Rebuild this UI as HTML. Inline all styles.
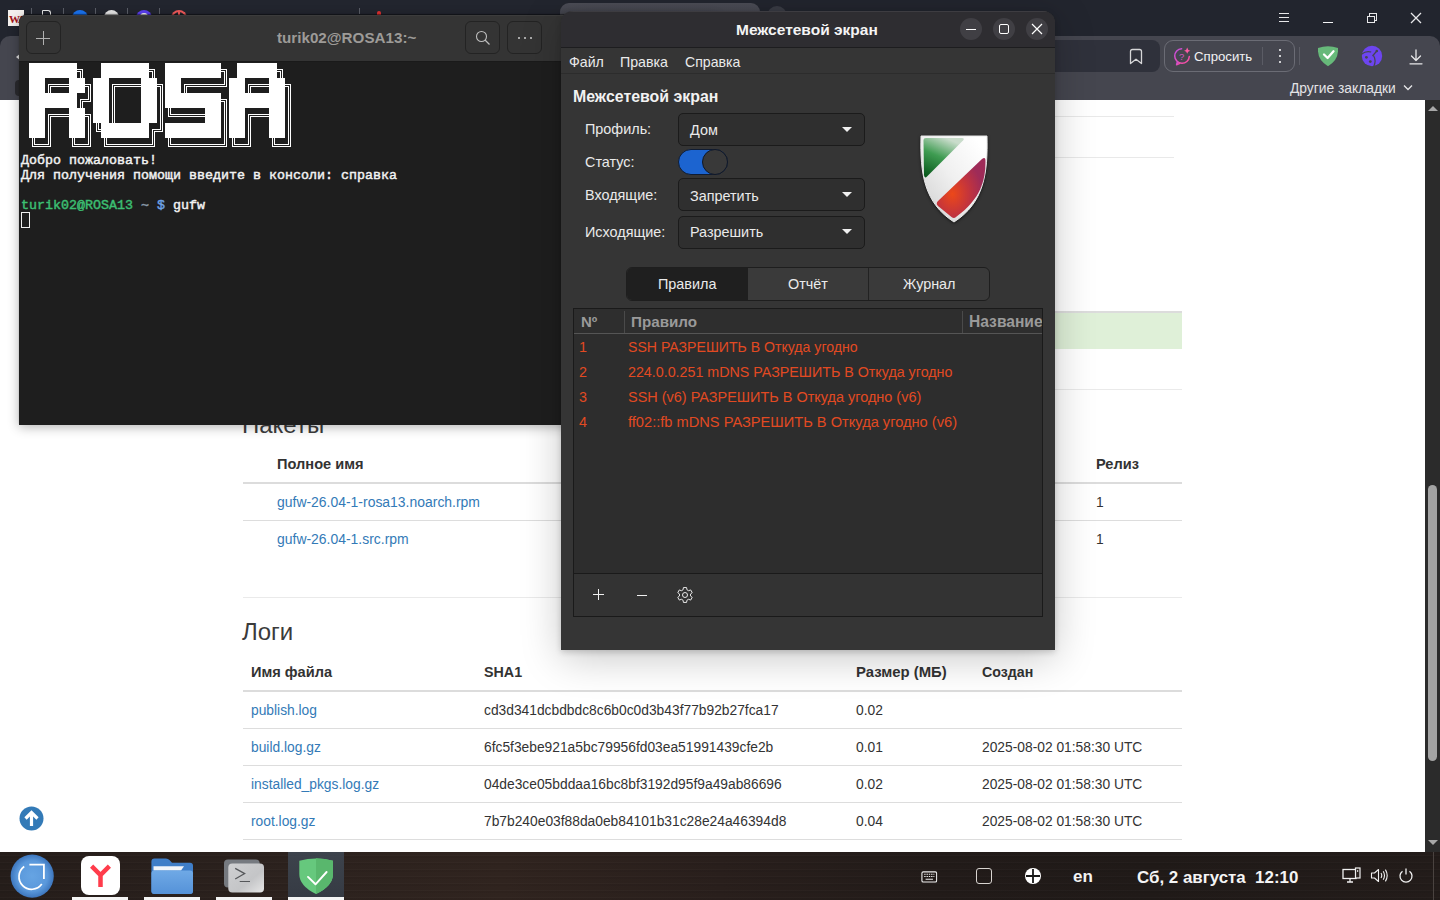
<!DOCTYPE html>
<html><head><meta charset="utf-8">
<style>
*{box-sizing:border-box;margin:0;padding:0}
html,body{width:1440px;height:900px;overflow:hidden;background:#fff;font-family:"Liberation Sans",sans-serif}
.a{position:absolute}
.t{position:absolute;white-space:pre;line-height:1}
</style></head><body>
<div class="a" style="left:0;top:0;width:1440px;height:900px">

<!-- ===== BROWSER ===== -->
<div class="a" id="tabbar" style="left:0;top:0;width:1440px;height:60px;background:#22252e">
  <!-- pinned tab favicons -->
  <div class="a" style="left:8px;top:10px;width:16px;height:16px;background:#f4f0ee;overflow:hidden"><div class="t" style="left:1px;top:3px;font:bold 11px 'Liberation Serif',serif;color:#a3141a;letter-spacing:-1px">WA</div></div>
  <div class="a" style="left:31px;top:8px;width:1px;height:6px;background:#5a5d66"></div>
  <div class="a" style="left:42px;top:10px;width:9px;height:8px;border:1.5px solid #e8e8e8;border-bottom:none;border-radius:1px 3px 0 0"></div>
  <div class="a" style="left:63px;top:8px;width:1px;height:6px;background:#5a5d66"></div>
  <div class="a" style="left:72px;top:10px;width:16px;height:8px;background:#1a73f0;border-radius:8px 8px 0 0"></div>
  <div class="a" style="left:95px;top:8px;width:1px;height:6px;background:#5a5d66"></div>
  <div class="a" style="left:104px;top:10px;width:15px;height:8px;background:#e6e6e6;border-radius:8px 8px 0 0"></div>
  <div class="a" style="left:127px;top:8px;width:1px;height:6px;background:#5a5d66"></div>
  <div class="a" style="left:136px;top:10px;width:16px;height:8px;background:#5b3ff0;border-radius:8px 8px 0 0"><div class="a" style="left:4px;top:3px;width:8px;height:6px;background:#fff;border-radius:4px 4px 0 0"></div></div>
  <div class="a" style="left:159px;top:8px;width:1px;height:6px;background:#5a5d66"></div>
  <div class="a" style="left:171px;top:10px;width:16px;height:8px;border:2px solid #f05a5a;border-bottom:none;border-radius:8px 8px 0 0"><div class="a" style="left:5px;top:0;width:2px;height:6px;background:#f05a5a"></div></div>
  <div class="a" style="left:359px;top:8px;width:1px;height:6px;background:#5a5d66"></div>
  <div class="a" style="left:377px;top:11px;width:4px;height:5px;background:#e03030;border-radius:2px 2px 0 0"></div>
  <!-- active tab -->
  <div class="a" style="left:560px;top:3px;width:200px;height:40px;background:linear-gradient(#4b4c55,#45464f 12px);border-radius:9px 9px 0 0"></div>
  <div class="a" style="left:767px;top:6px;width:20px;height:20px;background:#3a3c45;border-radius:50%"></div>
  <!-- window controls -->
  <div class="a" style="left:1279px;top:13px;width:10px;height:1.4px;background:#e8e8ea"></div>
  <div class="a" style="left:1279px;top:17px;width:10px;height:1.4px;background:#e8e8ea"></div>
  <div class="a" style="left:1279px;top:21px;width:10px;height:1.4px;background:#e8e8ea"></div>
  <div class="a" style="left:1323px;top:22px;width:10px;height:1px;background:#f4f4f6"></div>
  <div class="a" style="left:1369px;top:13px;width:8px;height:7.5px;border:1.4px solid #e8e8ea"></div>
  <div class="a" style="left:1367px;top:16px;width:7.5px;height:7px;border:1.4px solid #e8e8ea;background:#22252e"></div>
  <svg class="a" style="left:1410px;top:12px" width="12" height="12" viewBox="0 0 12 12"><path d="M1 1L11 11M11 1L1 11" stroke="#e8e8ea" stroke-width="1.3"/></svg>
</div>
<div class="a" id="toolbar" style="left:0;top:36px;width:1440px;height:64px;background:#45464f;border-radius:10px 10px 0 0">
  <div class="a" style="left:15px;top:44px;width:8px;height:16px;background:#2a2a2e;border-radius:4px"></div>
  <div class="a" style="left:16px;top:17px;width:0;height:0;border-top:4px solid transparent;border-bottom:4px solid transparent;border-right:5px solid #e0e0e0"></div>
  <!-- url field -->
  <div class="a" style="left:900px;top:4px;width:260px;height:32px;background:#2f313b;border-radius:8px"></div>
  <svg class="a" style="left:1129px;top:12px" width="14" height="17" viewBox="0 0 14 17"><path d="M1.5 15.5V3.5Q1.5 1.5 3.5 1.5H10.5Q12.5 1.5 12.5 3.5V15.5L7 11.2 1.5 15.5Z" fill="none" stroke="#d6d6d8" stroke-width="1.3" stroke-linejoin="round"/></svg>
  <!-- Ask button -->
  <div class="a" style="left:1164px;top:4px;width:131px;height:32px;border:1px solid #6b6c75;border-radius:9px"></div>
  <svg class="a" style="left:1173px;top:10px" width="20" height="20" viewBox="0 0 20 20"><defs><linearGradient id="pk" x1="0" y1="0" x2="1" y2="1"><stop offset="0" stop-color="#c04ee0"/><stop offset="1" stop-color="#ff4f9a"/></linearGradient></defs><path d="M8.6 2.7A7.3 7.3 0 1 0 16.3 10.6" fill="none" stroke="url(#pk)" stroke-width="1.5" stroke-linecap="round"/><path d="M4.4 15.6L3.6 18.8L7.3 17.1" fill="none" stroke="url(#pk)" stroke-width="1.5" stroke-linejoin="round"/><text x="6.1" y="13.6" font-family="Liberation Sans" font-size="9.5" fill="#d456c4">?</text><path d="M14.2 1.6Q14.6 4.3 17.3 4.7Q14.6 5.1 14.2 7.8Q13.8 5.1 11.1 4.7Q13.8 4.3 14.2 1.6Z" fill="#ff5aa6"/></svg>
  <div class="t" style="left:1194px;top:14px;font-size:13.2px;color:#f2f2f4">Спросить</div>
  <div class="a" style="left:1262px;top:11px;width:1px;height:18px;background:#5b5c65"></div>
  <div class="a" style="left:1278.5px;top:12.5px;width:2px;height:2px;background:#cfcfd2"></div>
  <div class="a" style="left:1278.5px;top:18.5px;width:2px;height:2px;background:#cfcfd2"></div>
  <div class="a" style="left:1278.5px;top:24.5px;width:2px;height:2px;background:#cfcfd2"></div>
  <div class="a" style="left:1299px;top:11px;width:1px;height:18px;background:#5b5c65"></div>
  <!-- shield -->
  <svg class="a" style="left:1317px;top:9px" width="22" height="22" viewBox="0 0 22 22"><path d="M1 3Q11 -0.5 21 3V6.5Q20.5 15.5 11 21.2Q1.5 15.5 1 6.5Z" fill="#67b97a"/><path d="M7 9.5L10.6 13L16.5 6.3" fill="none" stroke="#fff" stroke-width="2.3" stroke-linecap="round" stroke-linejoin="round"/></svg>
  <!-- purple -->
  <svg class="a" style="left:1361px;top:9px" width="22" height="22" viewBox="0 0 22 22"><circle cx="11" cy="11" r="10.2" fill="#6d45ef"/><g fill="none" stroke="#45464f" stroke-width="1.2"><path d="M0.8 9Q5 5.5 10.2 7"/><path d="M12.5 10.5Q15.5 15.5 12.8 21.5"/><path d="M11.5 11L15.8 6"/></g><circle cx="15.8" cy="6" r="1.3" fill="#45464f"/><circle cx="5.4" cy="12.3" r="1.4" fill="#45464f"/><circle cx="9.3" cy="16.6" r="1.4" fill="#45464f"/></svg>
  <!-- download -->
  <svg class="a" style="left:1409px;top:13px" width="14" height="16" viewBox="0 0 14 16"><path d="M7 1v10.5M2.5 7L7 11.5 11.5 7M1 14.8h12" fill="none" stroke="#e8e8ea" stroke-width="1.3" stroke-linecap="round" stroke-linejoin="round"/></svg>
  <!-- bookmarks -->
  <div class="t" style="left:1290px;top:45.5px;font-size:13.8px;color:#e4e4e6">Другие закладки</div>
  <svg class="a" style="left:1403px;top:48px" width="10" height="7" viewBox="0 0 10 7"><path d="M1 1.5l4 4 4-4" fill="none" stroke="#e6e6e8" stroke-width="1.3"/></svg>
</div>
<div class="a" id="page" style="left:0;top:100px;width:1425px;height:752px;background:#fff;overflow:hidden;color:#333">
  <div class="a" style="left:243px;top:16px;width:931px;height:1px;background:#e9e9e9"></div>
  <div class="a" style="left:243px;top:57px;width:931px;height:1px;background:#e9e9e9"></div>
  <div class="a" style="left:243px;top:211px;width:939px;height:2px;background:#dcdcdc"></div>
  <div class="a" style="left:243px;top:213px;width:939px;height:36px;background:#dff0d8"></div>
  <div class="a" style="left:243px;top:289px;width:939px;height:1px;background:#eaeaea"></div>
  <!-- Packages -->
  <div class="t" style="left:242px;top:313px;font-size:24px;color:#3b3b3b">Пакеты</div>
  <div class="t" style="left:277px;top:357px;font-size:14.6px;font-weight:bold">Полное имя</div>
  <div class="t" style="left:1096px;top:357px;font-size:14.6px;font-weight:bold">Релиз</div>
  <div class="a" style="left:243px;top:382px;width:939px;height:2px;background:#dcdcdc"></div>
  <div class="t" style="left:277px;top:396px;font-size:13.95px;color:#337ab7">gufw-26.04-1-rosa13.noarch.rpm</div>
  <div class="t" style="left:1096px;top:396px;font-size:13.85px">1</div>
  <div class="a" style="left:243px;top:420px;width:939px;height:1px;background:#dddddd"></div>
  <div class="t" style="left:277px;top:433px;font-size:13.95px;color:#337ab7">gufw-26.04-1.src.rpm</div>
  <div class="t" style="left:1096px;top:433px;font-size:13.85px">1</div>
  <div class="a" style="left:243px;top:497px;width:939px;height:1px;background:#eaeaea"></div>
  <!-- Logs -->
  <div class="t" style="left:242px;top:519.5px;font-size:24px;color:#3b3b3b">Логи</div>
  <div class="t" style="left:251px;top:565px;font-size:14.6px;font-weight:bold">Имя файла</div>
  <div class="t" style="left:484px;top:565px;font-size:14.3px;font-weight:bold">SHA1</div>
  <div class="t" style="left:856px;top:565px;font-size:14.9px;font-weight:bold">Размер (МБ)</div>
  <div class="t" style="left:982px;top:565px;font-size:14.2px;font-weight:bold">Создан</div>
  <div class="a" style="left:243px;top:590px;width:939px;height:2px;background:#dcdcdc"></div>
  <div class="t" style="left:251px;top:604px;font-size:13.8px;color:#337ab7">publish.log</div>
  <div class="t" style="left:484px;top:604px;font-size:13.8px">cd3d341dcbdbdc8c6b0c0d3b43f77b92b27fca17</div>
  <div class="t" style="left:856px;top:604px;font-size:13.8px">0.02</div>
  <div class="a" style="left:243px;top:628px;width:939px;height:1px;background:#dddddd"></div>
  <div class="t" style="left:251px;top:641px;font-size:13.8px;color:#337ab7">build.log.gz</div>
  <div class="t" style="left:484px;top:641px;font-size:13.8px">6fc5f3ebe921a5bc79956fd03ea51991439cfe2b</div>
  <div class="t" style="left:856px;top:641px;font-size:13.8px">0.01</div>
  <div class="t" style="left:982px;top:641px;font-size:13.8px">2025-08-02 01:58:30 UTC</div>
  <div class="a" style="left:243px;top:665px;width:939px;height:1px;background:#dddddd"></div>
  <div class="t" style="left:251px;top:678px;font-size:13.8px;color:#337ab7">installed_pkgs.log.gz</div>
  <div class="t" style="left:484px;top:678px;font-size:13.8px">04de3ce05bddaa16bc8bf3192d95f9a49ab86696</div>
  <div class="t" style="left:856px;top:678px;font-size:13.8px">0.02</div>
  <div class="t" style="left:982px;top:678px;font-size:13.8px">2025-08-02 01:58:30 UTC</div>
  <div class="a" style="left:243px;top:702px;width:939px;height:1px;background:#dddddd"></div>
  <div class="t" style="left:251px;top:715px;font-size:13.8px;color:#337ab7">root.log.gz</div>
  <div class="t" style="left:484px;top:715px;font-size:13.8px">7b7b240e03f88da0eb84101b31c28e24a46394d8</div>
  <div class="t" style="left:856px;top:715px;font-size:13.8px">0.04</div>
  <div class="t" style="left:982px;top:715px;font-size:13.8px">2025-08-02 01:58:30 UTC</div>
  <div class="a" style="left:243px;top:739px;width:939px;height:1px;background:#dddddd"></div>
  <!-- back to top -->
  <svg class="a" style="left:19px;top:706px" width="25" height="25" viewBox="0 0 25 25"><circle cx="12.5" cy="12.5" r="12" fill="#337ab7"/><path d="M12.5 20V7M6.5 12.5l6-6 6 6" fill="none" stroke="#fff" stroke-width="3.2" stroke-linecap="butt" stroke-linejoin="miter"/></svg>
</div>
<div class="a" id="scroll" style="left:1425px;top:100px;width:15px;height:752px;background:#2b2b2b">
  <div class="a" style="left:2.5px;top:6px;width:0;height:0;border-left:5px solid transparent;border-right:5px solid transparent;border-bottom:5px solid #a8a8a8"></div>
  <div class="a" style="left:3px;top:385px;width:9px;height:276px;background:#a3a3a3;border-radius:4.5px"></div>
  <div class="a" style="left:2.5px;top:740px;width:0;height:0;border-left:5px solid transparent;border-right:5px solid transparent;border-top:5px solid #a8a8a8"></div>
</div>

<!-- ===== TASKBAR ===== -->
<div class="a" id="taskbar" style="left:0;top:852px;width:1440px;height:48px;background:repeating-linear-gradient(0deg,rgba(0,0,0,.05) 0 2px,rgba(255,255,255,.02) 2px 3px,rgba(0,0,0,0) 3px 7px),linear-gradient(90deg,#251d1a 0%,#2c221e 20%,#30241f 35%,#291f1c 50%,#221b19 65%,#201a18 80%,#231c1a 100%)">
  <!-- start -->
  <svg class="a" style="left:5px;top:0" width="55" height="48" viewBox="0 0 55 48"><defs><radialGradient id="stg" cx=".5" cy=".5" r=".5"><stop offset="0" stop-color="#66a4e3"/><stop offset=".7" stop-color="#5a98db"/><stop offset="1" stop-color="#3d76bd"/></radialGradient></defs><circle cx="27.2" cy="24.1" r="21.6" fill="url(#stg)"/><path d="M19.2 14.5A12.6 12.6 0 1 0 36.8 32.1" fill="none" stroke="#fff" stroke-width="1.7"/><path d="M24.4 12.7H38.9V27" fill="none" stroke="#fff" stroke-width="1.8"/></svg>
  <!-- yandex -->
  <div class="a" style="left:81px;top:4px;width:39px;height:39px;background:#fff;border-radius:8px"></div>
  <svg class="a" style="left:81px;top:4px" width="39" height="39" viewBox="0 0 39 39"><path d="M10.6 10.2L19.5 19.1L28.4 10.2M19.5 17.5V31" fill="none" stroke="#ff3c4b" stroke-width="4.5" stroke-linejoin="miter"/></svg>
  <!-- folder -->
  <svg class="a" style="left:150px;top:5px" width="46" height="40" viewBox="0 0 46 40"><defs><linearGradient id="fg" x1="0" y1="0" x2="0" y2="1"><stop offset="0" stop-color="#6fa9e6"/><stop offset="1" stop-color="#5592d8"/></linearGradient></defs><path d="M1.4 4.4Q1.4 1.4 4.4 1.4H16Q18 1.4 19.5 3L22 5.7H40Q43 5.7 43 8.7V34Q43 37 40 37H4.4Q1.4 37 1.4 34Z" fill="#3f7ec8"/><path d="M3.5 9.2H34L31 13.5H3.5Z" fill="#f2f5fa"/><path d="M1.4 16.5Q1.4 13.5 4.4 13.5H40Q43 13.5 43 16.5V34Q43 37 40 37H4.4Q1.4 37 1.4 34Z" fill="url(#fg)"/></svg>
  <!-- terminal -->
  <svg class="a" style="left:223px;top:6px" width="44" height="38" viewBox="0 0 44 38"><defs><linearGradient id="tg" x1="0" y1="0" x2="1" y2="1"><stop offset="0" stop-color="#cfd0d2"/><stop offset=".6" stop-color="#c4c5c7"/><stop offset="1" stop-color="#e6e6e6"/></linearGradient></defs><rect x="1" y="1.4" width="35.7" height="28.2" rx="4" fill="#767a80"/><rect x="5.3" y="5.4" width="35.7" height="29.2" rx="4" fill="url(#tg)"/><path d="M12.2 10.4L21.7 15.6L12.2 21M16.7 23.5H27" fill="none" stroke="#55575a" stroke-width="1.2"/></svg>
  <!-- gufw active -->
  <div class="a" style="left:288px;top:0;width:56px;height:45px;background:linear-gradient(#3d434c,#363b44)"></div>
  <svg class="a" style="left:298px;top:5px" width="37" height="39" viewBox="0 0 37 39"><path d="M1.3 3.8Q18 -1 35 3.8V17Q35 29 18 37Q1.3 29 1.3 17Z" fill="#66c87d"/><path d="M18 1.3Q27 1.6 35 3.8V17Q35 29 18 37Z" fill="#59b76d"/><path d="M10 19.9L17.5 27.3L28.6 15" fill="none" stroke="#fff" stroke-width="1.9" stroke-linecap="round" stroke-linejoin="round"/></svg>
  <div class="a" style="left:72px;top:45px;width:56px;height:3px;background:#f4f4f4"></div>
  <div class="a" style="left:144px;top:45px;width:56px;height:3px;background:#f4f4f4"></div>
  <div class="a" style="left:216px;top:45px;width:56px;height:3px;background:#f4f4f4"></div>
  <div class="a" style="left:288px;top:45px;width:56px;height:3px;background:#f4f4f4"></div>
  <!-- tray -->
  <svg class="a" style="left:920.5px;top:18.5px;transform:scale(.92);transform-origin:0 0" width="18" height="13" viewBox="0 0 18 13"><rect x="1" y="1" width="16" height="11" rx="1.5" fill="none" stroke="#f0f0f0" stroke-width="1.2"/><path d="M3.5 3.5h1.5M6 3.5h1.5M8.5 3.5h1.5M11 3.5h1.5M13.5 3.5h1M3.5 6h1.5M6 6h1.5M8.5 6h1.5M11 6h1.5M13.5 6h1M5 9h8" stroke="#f0f0f0" stroke-width="1.2"/></svg>
  <div class="a" style="left:976px;top:16px;width:16px;height:16px;border:1.6px solid #d8d4d0;border-radius:3px"></div>
  <svg class="a" style="left:1024px;top:15px" width="18" height="18" viewBox="0 0 18 18"><circle cx="9" cy="9" r="8" fill="#fff"/><path d="M9 2v14M2 9h14" stroke="#1a1a1a" stroke-width="1.8"/></svg>
  <div class="t" style="left:1073px;top:15.5px;font-size:17px;font-weight:bold;color:#f4f4f4">en</div>
  <div class="t" style="left:1137px;top:17.5px;font-size:16.9px;font-weight:bold;color:#f4f4f4">Сб, 2 августа  12:10</div>
  <svg class="a" style="left:1342px;top:15px" width="19" height="17" viewBox="0 0 19 17"><rect x="1" y="2.5" width="13" height="9" fill="none" stroke="#f0f0f0" stroke-width="1.3"/><path d="M5 15h6M8 11.5V15" stroke="#f0f0f0" stroke-width="1.3"/><rect x="13.5" y="1" width="4.5" height="10" fill="#2b2421" stroke="#f0f0f0" stroke-width="1.2"/><path d="M15.7 3v2" stroke="#f0f0f0" stroke-width="1"/></svg>
  <svg class="a" style="left:1370px;top:16px" width="18" height="15" viewBox="0 0 18 15"><path d="M1.5 5h3l4-3.5v12l-4-3.5h-3z" fill="none" stroke="#f0f0f0" stroke-width="1.1" stroke-linejoin="round"/><path d="M11 5q1.5 2.5 0 5M13.2 3.3q2.6 4.2 0 8.4M15.4 1.6q3.6 5.9 0 11.8" fill="none" stroke="#f0f0f0" stroke-width="1.1"/></svg>
  <svg class="a" style="left:1398px;top:15px" width="16" height="17" viewBox="0 0 16 17"><path d="M4.5 4.2A6 6 0 1 0 11.5 4.2" fill="none" stroke="#f0f0f0" stroke-width="1.3"/><path d="M8 1.5v6" stroke="#f0f0f0" stroke-width="1.3"/></svg>
  <div class="a" style="left:1433px;top:0;width:1px;height:48px;background:#4a4340"></div>
</div>

<!-- ===== TERMINAL ===== -->
<div class="a" id="term" style="left:19px;top:15px;width:700px;height:410px;background:#1e1e1e;border-radius:8px 8px 0 0;box-shadow:0 -1px 1px rgba(0,0,0,.45),0 2px 12px rgba(0,0,0,.3);overflow:hidden">
  <div class="a" style="left:0;top:0;width:700px;height:46px;background:#343434;border-top:1px solid #3c3c3c"></div>
  <div class="a" style="left:7px;top:6px;width:35px;height:33px;border:1px solid #232323;border-radius:6px"></div>
  <div class="a" style="left:17px;top:23px;width:14px;height:1px;background:#b0b0b0"></div>
  <div class="a" style="left:24px;top:16px;width:1px;height:14px;background:#b0b0b0"></div>
  <div class="t" style="left:258px;top:15px;font-size:15.2px;font-weight:bold;color:#9d9b98">turik02@ROSA13:~</div>
  <div class="a" style="left:446px;top:6px;width:35px;height:33px;border:1px solid #232323;border-radius:6px"></div>
  <svg class="a" style="left:455px;top:14px" width="18" height="18" viewBox="0 0 18 18"><circle cx="7.5" cy="7.5" r="5" fill="none" stroke="#bdbdbd" stroke-width="1.1"/><path d="M11 11l4.5 4.5" stroke="#bdbdbd" stroke-width="1.3"/></svg>
  <div class="a" style="left:488px;top:6px;width:35px;height:33px;border:1px solid #232323;border-radius:6px"></div>
  <div class="a" style="left:499px;top:22px;width:1.8px;height:1.8px;background:#a8a8a8"></div>
  <div class="a" style="left:505px;top:22px;width:1.8px;height:1.8px;background:#a8a8a8"></div>
  <div class="a" style="left:511px;top:22px;width:1.8px;height:1.8px;background:#a8a8a8"></div>
  <div class="a" style="left:0;top:46px;width:700px;height:1px;background:#1a1a1a"></div>
  <div id="tt" style="position:absolute;left:2px;top:138px;font-family:'Liberation Mono',monospace;font-size:13.33px;line-height:15px;white-space:pre;color:#f2f2f2;font-weight:normal;-webkit-text-stroke:0.45px currentColor">Добро пожаловать!
Для получения помощи введите в консоли: справка

<span style="color:#3cbf72">turik02@ROSA13</span> <span style="color:#8a9aa8">~</span> <span style="color:#6ea2e6">$</span> gufw
</div>
  <div class="a" style="left:2px;top:197px;width:9px;height:16px;border:1px solid #f0f0f0"></div>
</div>
<div class="a" style="left:0;top:0"><svg width="264" height="90" viewBox="0 0 264 90" style="position:absolute;left:29px;top:63px" shape-rendering="crispEdges"><path fill="#fff" d="M0 0h8v15h-8zM8 0h8v15h-8zM16 0h8v15h-8zM24 0h8v15h-8zM32 0h8v15h-8zM40 0h8v15h-8zM48 6h6v1h-6zM53 6h1v9h-1zM48 8h4v1h-4zM51 8h1v7h-1zM72 0h8v15h-8zM80 0h8v15h-8zM88 0h8v15h-8zM96 0h8v15h-8zM104 0h8v15h-8zM112 0h8v15h-8zM120 6h6v1h-6zM125 6h1v9h-1zM120 8h4v1h-4zM123 8h1v7h-1zM136 0h8v15h-8zM144 0h8v15h-8zM152 0h8v15h-8zM160 0h8v15h-8zM168 0h8v15h-8zM176 0h8v15h-8zM184 0h8v15h-8zM192 6h6v1h-6zM197 6h1v9h-1zM192 8h4v1h-4zM195 8h1v7h-1zM208 0h8v15h-8zM216 0h8v15h-8zM224 0h8v15h-8zM232 0h8v15h-8zM240 0h8v15h-8zM248 6h6v1h-6zM253 6h1v9h-1zM248 8h4v1h-4zM251 8h1v7h-1zM0 15h8v15h-8zM8 15h8v15h-8zM19 21h5v1h-5zM19 21h1v9h-1zM21 23h3v1h-3zM21 23h1v7h-1zM24 21h8v1h-8zM24 23h8v1h-8zM32 21h8v1h-8zM32 23h8v1h-8zM40 15h8v15h-8zM48 15h8v15h-8zM56 21h6v1h-6zM61 21h1v9h-1zM56 23h4v1h-4zM59 23h1v7h-1zM64 15h8v15h-8zM72 15h8v15h-8zM83 21h5v1h-5zM83 21h1v9h-1zM85 23h3v1h-3zM85 23h1v7h-1zM88 21h8v1h-8zM88 23h8v1h-8zM96 21h8v1h-8zM96 23h8v1h-8zM104 21h8v1h-8zM104 23h8v1h-8zM112 15h8v15h-8zM120 15h8v15h-8zM128 21h6v1h-6zM133 21h1v9h-1zM128 23h4v1h-4zM131 23h1v7h-1zM136 15h8v15h-8zM144 15h8v15h-8zM155 21h5v1h-5zM155 21h1v9h-1zM157 23h3v1h-3zM157 23h1v7h-1zM160 21h8v1h-8zM160 23h8v1h-8zM168 21h8v1h-8zM168 23h8v1h-8zM176 21h8v1h-8zM176 23h8v1h-8zM184 21h8v1h-8zM184 23h8v1h-8zM192 23h6v1h-6zM197 15h1v9h-1zM192 21h4v1h-4zM195 15h1v7h-1zM200 15h8v15h-8zM208 15h8v15h-8zM219 21h5v1h-5zM219 21h1v9h-1zM221 23h3v1h-3zM221 23h1v7h-1zM224 21h8v1h-8zM224 23h8v1h-8zM232 21h8v1h-8zM232 23h8v1h-8zM240 15h8v15h-8zM248 15h8v15h-8zM256 21h6v1h-6zM261 21h1v9h-1zM256 23h4v1h-4zM259 23h1v7h-1zM0 30h8v15h-8zM8 30h8v15h-8zM16 30h8v15h-8zM24 30h8v15h-8zM32 30h8v15h-8zM40 30h8v15h-8zM51 36h5v1h-5zM51 36h1v9h-1zM53 38h3v1h-3zM53 38h1v7h-1zM56 38h6v1h-6zM61 30h1v9h-1zM56 36h4v1h-4zM59 30h1v7h-1zM64 30h8v15h-8zM72 30h8v15h-8zM83 30h1v15h-1zM85 30h1v15h-1zM112 30h8v15h-8zM120 30h8v15h-8zM131 30h1v15h-1zM133 30h1v15h-1zM136 30h8v15h-8zM144 30h8v15h-8zM152 30h8v15h-8zM160 30h8v15h-8zM168 30h8v15h-8zM176 30h8v15h-8zM184 30h8v15h-8zM192 36h6v1h-6zM197 36h1v9h-1zM192 38h4v1h-4zM195 38h1v7h-1zM200 30h8v15h-8zM208 30h8v15h-8zM216 30h8v15h-8zM224 30h8v15h-8zM232 30h8v15h-8zM240 30h8v15h-8zM248 30h8v15h-8zM259 30h1v15h-1zM261 30h1v15h-1zM0 45h8v15h-8zM8 45h8v15h-8zM19 51h5v1h-5zM19 51h1v9h-1zM21 53h3v1h-3zM21 53h1v7h-1zM24 51h8v1h-8zM24 53h8v1h-8zM32 51h8v1h-8zM32 53h8v1h-8zM40 45h8v15h-8zM48 45h8v15h-8zM56 51h6v1h-6zM61 51h1v9h-1zM56 53h4v1h-4zM59 53h1v7h-1zM64 45h8v15h-8zM72 45h8v15h-8zM83 45h1v15h-1zM85 45h1v15h-1zM112 45h8v15h-8zM120 45h8v15h-8zM131 45h1v15h-1zM133 45h1v15h-1zM139 53h5v1h-5zM139 45h1v9h-1zM141 51h3v1h-3zM141 45h1v7h-1zM144 51h8v1h-8zM144 53h8v1h-8zM152 51h8v1h-8zM152 53h8v1h-8zM160 51h8v1h-8zM160 53h8v1h-8zM168 51h8v1h-8zM168 53h8v1h-8zM176 45h8v15h-8zM184 45h8v15h-8zM195 45h1v15h-1zM197 45h1v15h-1zM200 45h8v15h-8zM208 45h8v15h-8zM219 51h5v1h-5zM219 51h1v9h-1zM221 53h3v1h-3zM221 53h1v7h-1zM224 51h8v1h-8zM224 53h8v1h-8zM232 51h8v1h-8zM232 53h8v1h-8zM240 45h8v15h-8zM248 45h8v15h-8zM259 45h1v15h-1zM261 45h1v15h-1zM0 60h8v15h-8zM8 60h8v15h-8zM19 60h1v15h-1zM21 60h1v15h-1zM40 60h8v15h-8zM48 60h8v15h-8zM59 60h1v15h-1zM61 60h1v15h-1zM67 68h5v1h-5zM67 60h1v9h-1zM69 66h3v1h-3zM69 60h1v7h-1zM72 60h8v15h-8zM80 60h8v15h-8zM88 60h8v15h-8zM96 60h8v15h-8zM104 60h8v15h-8zM112 60h8v15h-8zM123 66h5v1h-5zM123 66h1v9h-1zM125 68h3v1h-3zM125 68h1v7h-1zM128 68h6v1h-6zM133 60h1v9h-1zM128 66h4v1h-4zM131 60h1v7h-1zM136 60h8v15h-8zM144 60h8v15h-8zM152 60h8v15h-8zM160 60h8v15h-8zM168 60h8v15h-8zM176 60h8v15h-8zM184 60h8v15h-8zM195 60h1v15h-1zM197 60h1v15h-1zM200 60h8v15h-8zM208 60h8v15h-8zM219 60h1v15h-1zM221 60h1v15h-1zM240 60h8v15h-8zM248 60h8v15h-8zM259 60h1v15h-1zM261 60h1v15h-1zM3 83h5v1h-5zM3 75h1v9h-1zM5 81h3v1h-3zM5 75h1v7h-1zM8 81h8v1h-8zM8 83h8v1h-8zM16 83h6v1h-6zM21 75h1v9h-1zM16 81h4v1h-4zM19 75h1v7h-1zM43 83h5v1h-5zM43 75h1v9h-1zM45 81h3v1h-3zM45 75h1v7h-1zM48 81h8v1h-8zM48 83h8v1h-8zM56 83h6v1h-6zM61 75h1v9h-1zM56 81h4v1h-4zM59 75h1v7h-1zM75 83h5v1h-5zM75 75h1v9h-1zM77 81h3v1h-3zM77 75h1v7h-1zM80 81h8v1h-8zM80 83h8v1h-8zM88 81h8v1h-8zM88 83h8v1h-8zM96 81h8v1h-8zM96 83h8v1h-8zM104 81h8v1h-8zM104 83h8v1h-8zM112 81h8v1h-8zM112 83h8v1h-8zM120 83h6v1h-6zM125 75h1v9h-1zM120 81h4v1h-4zM123 75h1v7h-1zM139 83h5v1h-5zM139 75h1v9h-1zM141 81h3v1h-3zM141 75h1v7h-1zM144 81h8v1h-8zM144 83h8v1h-8zM152 81h8v1h-8zM152 83h8v1h-8zM160 81h8v1h-8zM160 83h8v1h-8zM168 81h8v1h-8zM168 83h8v1h-8zM176 81h8v1h-8zM176 83h8v1h-8zM184 81h8v1h-8zM184 83h8v1h-8zM192 83h6v1h-6zM197 75h1v9h-1zM192 81h4v1h-4zM195 75h1v7h-1zM203 83h5v1h-5zM203 75h1v9h-1zM205 81h3v1h-3zM205 75h1v7h-1zM208 81h8v1h-8zM208 83h8v1h-8zM216 83h6v1h-6zM221 75h1v9h-1zM216 81h4v1h-4zM219 75h1v7h-1zM243 83h5v1h-5zM243 75h1v9h-1zM245 81h3v1h-3zM245 75h1v7h-1zM248 81h8v1h-8zM248 83h8v1h-8zM256 83h6v1h-6zM261 75h1v9h-1zM256 81h4v1h-4zM259 75h1v7h-1z"/></svg></div>

<!-- ===== GUFW ===== -->
<div class="a" id="gufw" style="left:561px;top:11px;width:494px;height:639px;background:#353535;border-radius:12px 12px 0 0;box-shadow:0 2px 6px rgba(0,0,0,.18),0 8px 40px rgba(0,0,0,.22);overflow:hidden;color:#eaeaea">
  <!-- titlebar -->
  <div class="a" style="left:0;top:0;width:494px;height:37px;background:#2e2d31;border-top:1px solid #3d3c41;border-bottom:1px solid #1d1d1f"></div>
  <div class="t" style="left:175px;top:11px;font-size:15.5px;font-weight:bold;color:#f4f4f4">Межсетевой экран</div>
  <div class="a" style="left:399px;top:7px;width:22px;height:22px;border-radius:50%;background:#403f44"></div>
  <div class="a" style="left:405px;top:18px;width:10px;height:1.3px;background:#fff"></div>
  <div class="a" style="left:432px;top:7px;width:22px;height:22px;border-radius:50%;background:#403f44"></div>
  <div class="a" style="left:438px;top:13px;width:10px;height:10px;border:1.3px solid #fff;border-radius:2px"></div>
  <div class="a" style="left:465px;top:7px;width:22px;height:22px;border-radius:50%;background:#403f44"></div>
  <svg class="a" style="left:470px;top:12px" width="12" height="12" viewBox="0 0 12 12"><path d="M1 1L11 11M11 1L1 11" stroke="#fff" stroke-width="1.2"/></svg>
  <!-- menubar -->
  <div class="t" style="left:8px;top:44px;font-size:14.2px">Файл</div>
  <div class="t" style="left:59px;top:44px;font-size:14.2px">Правка</div>
  <div class="t" style="left:124px;top:44px;font-size:14.1px">Справка</div>
  <div class="a" style="left:0;top:62px;width:494px;height:1px;background:#2c2c2c"></div>
  <!-- header -->
  <div class="t" style="left:12px;top:78px;font-size:15.9px;font-weight:bold;color:#f2f2f2">Межсетевой экран</div>
  <div class="t" style="left:24px;top:111px;font-size:14.4px">Профиль:</div>
  <div class="t" style="left:24px;top:144px;font-size:14.4px">Статус:</div>
  <div class="t" style="left:24px;top:177px;font-size:14.4px">Входящие:</div>
  <div class="t" style="left:24px;top:214px;font-size:14.4px">Исходящие:</div>
  <!-- combos -->
  <div class="a" style="left:117px;top:102px;width:187px;height:33px;background:#2f2f2f;border:1px solid #1b1b1b;border-radius:5px"></div>
  <div class="t" style="left:129px;top:112px;font-size:14.4px">Дом</div>
  <div class="a" style="left:281px;top:116px;width:0;height:0;border-left:5px solid transparent;border-right:5px solid transparent;border-top:5px solid #f0f0f0"></div>
  <div class="a" style="left:117px;top:167px;width:187px;height:33px;background:#2f2f2f;border:1px solid #1b1b1b;border-radius:5px"></div>
  <div class="t" style="left:129px;top:178px;font-size:14.4px">Запретить</div>
  <div class="a" style="left:281px;top:181px;width:0;height:0;border-left:5px solid transparent;border-right:5px solid transparent;border-top:5px solid #f0f0f0"></div>
  <div class="a" style="left:117px;top:205px;width:187px;height:33px;background:#2f2f2f;border:1px solid #1b1b1b;border-radius:5px"></div>
  <div class="t" style="left:129px;top:214px;font-size:14.4px">Разрешить</div>
  <div class="a" style="left:281px;top:218px;width:0;height:0;border-left:5px solid transparent;border-right:5px solid transparent;border-top:5px solid #f0f0f0"></div>
  <!-- toggle -->
  <div class="a" style="left:117px;top:138px;width:50px;height:26px;background:#1c64d0;border:1px solid #0f1c33;border-radius:13px"></div>
  <div class="a" style="left:141px;top:138px;width:26px;height:26px;background:#393939;border:1px solid #101828;border-radius:50%"></div>
  <!-- shield -->
  <svg class="a" style="left:359px;top:124px;filter:drop-shadow(0 1px 1.5px rgba(0,0,0,.6))" width="70" height="90" viewBox="0 0 70 90">
   <defs>
    <linearGradient id="sw" x1="0.9" y1="0.1" x2="0.1" y2="0.9"><stop offset="0" stop-color="#ffffff"/><stop offset=".5" stop-color="#f0f0f0"/><stop offset="1" stop-color="#d4d4d4"/></linearGradient>
    <linearGradient id="gg" x1="0.1" y1="1" x2="0.55" y2="0"><stop offset="0" stop-color="#07561a"/><stop offset=".55" stop-color="#3f9c52"/><stop offset="1" stop-color="#c9dccb"/></linearGradient>
    <radialGradient id="rg" cx="0.32" cy="0.6" r="0.62"><stop offset="0" stop-color="#ec4819"/><stop offset=".55" stop-color="#c4343c"/><stop offset="1" stop-color="#9e2b58"/></radialGradient>
   </defs>
   <path d="M1 1H67C68 38 64 68 34 87C4 68 0 38 1 1Z" fill="url(#sw)" stroke="#e8e8e8" stroke-width="1"/>
   <path d="M3.5 5Q3.5 3 6 3H42Q45 3 43 5.5L7 41.5Q4.5 44 4 40Z" fill="url(#gg)"/>
   <path d="M62 24Q65.5 21 65.5 26C65.5 45 61 64 36 82Q34 84 31.5 82L18 71Q15.5 68.5 18 66Z" fill="url(#rg)"/>
  </svg>
  <!-- tabs -->
  <div class="a" style="left:65px;top:256px;width:364px;height:34px;background:#3a3a3a;border:1px solid #1e1e1e;border-radius:6px;overflow:hidden">
    <div class="a" style="left:0;top:0;width:121px;height:34px;background:#1f1f1f"></div>
    <div class="a" style="left:241px;top:0;width:1px;height:34px;background:#222"></div>
  </div>
  <div class="t" style="left:97px;top:266px;font-size:14.4px">Правила</div>
  <div class="t" style="left:227px;top:266px;font-size:14.4px">Отчёт</div>
  <div class="t" style="left:342px;top:266px;font-size:14.4px">Журнал</div>
  <!-- rules table -->
  <div class="a" style="left:12px;top:297px;width:470px;height:309px;border:1px solid #1a1a1a;background:#2d2d2d;overflow:hidden">
    <div class="a" style="left:0;top:0;width:468px;height:25px;background:#2e2e2e;border-bottom:1px solid #555"></div>
    <div class="a" style="left:50px;top:2px;width:1px;height:22px;background:#4a4a4a"></div>
    <div class="a" style="left:388px;top:2px;width:1px;height:22px;background:#4a4a4a"></div>
    <div class="t" style="left:7px;top:5px;font-size:15px;font-weight:bold;color:#9a9a9a">Nº</div>
    <div class="t" style="left:57px;top:5px;font-size:15.2px;font-weight:bold;color:#9a9a9a">Правило</div>
    <div class="t" style="left:395px;top:5px;font-size:15.6px;font-weight:bold;color:#9a9a9a">Название</div>
    <div id="rows" style="position:absolute;left:-1px;top:25.5px;font-size:14.3px;line-height:25px;color:#e24a22;white-space:pre">
      <div class="a" style="left:6px;top:0">1</div><div class="a" style="left:55px;top:0;font-size:14.1px">SSH РАЗРЕШИТЬ В Откуда угодно</div>
      <div class="a" style="left:6px;top:25px">2</div><div class="a" style="left:55px;top:25px;font-size:14.28px">224.0.0.251 mDNS РАЗРЕШИТЬ В Откуда угодно</div>
      <div class="a" style="left:6px;top:50px">3</div><div class="a" style="left:55px;top:50px;font-size:14.46px">SSH (v6) РАЗРЕШИТЬ В Откуда угодно (v6)</div>
      <div class="a" style="left:6px;top:75px">4</div><div class="a" style="left:55px;top:75px;font-size:14.64px">ff02::fb mDNS РАЗРЕШИТЬ В Откуда угодно (v6)</div>
    </div>
    <div class="a" style="left:0;top:264px;width:468px;height:43px;background:#333;border-top:1px solid #1a1a1a"></div>
  </div>
  <!-- toolbar icons -->
  <div class="a" style="left:32px;top:583px;width:11px;height:1.2px;background:#f0f0f0"></div>
  <div class="a" style="left:37px;top:578px;width:1.2px;height:11px;background:#f0f0f0"></div>
  <div class="a" style="left:76px;top:584px;width:10px;height:1.2px;background:#f0f0f0"></div>
  <svg class="a" style="left:115px;top:575px" width="18" height="18" viewBox="0 0 18 18"><path d="M7.42 1.57 L10.58 1.57 L10.92 3.74 L12.60 4.71 L14.65 3.91 L16.23 6.65 L14.51 8.03 L14.51 9.97 L16.23 11.35 L14.65 14.09 L12.60 13.29 L10.92 14.26 L10.58 16.43 L7.42 16.43 L7.08 14.26 L5.40 13.29 L3.35 14.09 L1.77 11.35 L3.49 9.97 L3.49 8.03 L1.77 6.65 L3.35 3.91 L5.40 4.71 L7.08 3.74Z" fill="none" stroke="#e8e8e8" stroke-width="1" stroke-linejoin="round"/><circle cx="9" cy="9" r="2.5" fill="none" stroke="#e8e8e8" stroke-width="1"/></svg>
</div>

</div>
</body></html>
